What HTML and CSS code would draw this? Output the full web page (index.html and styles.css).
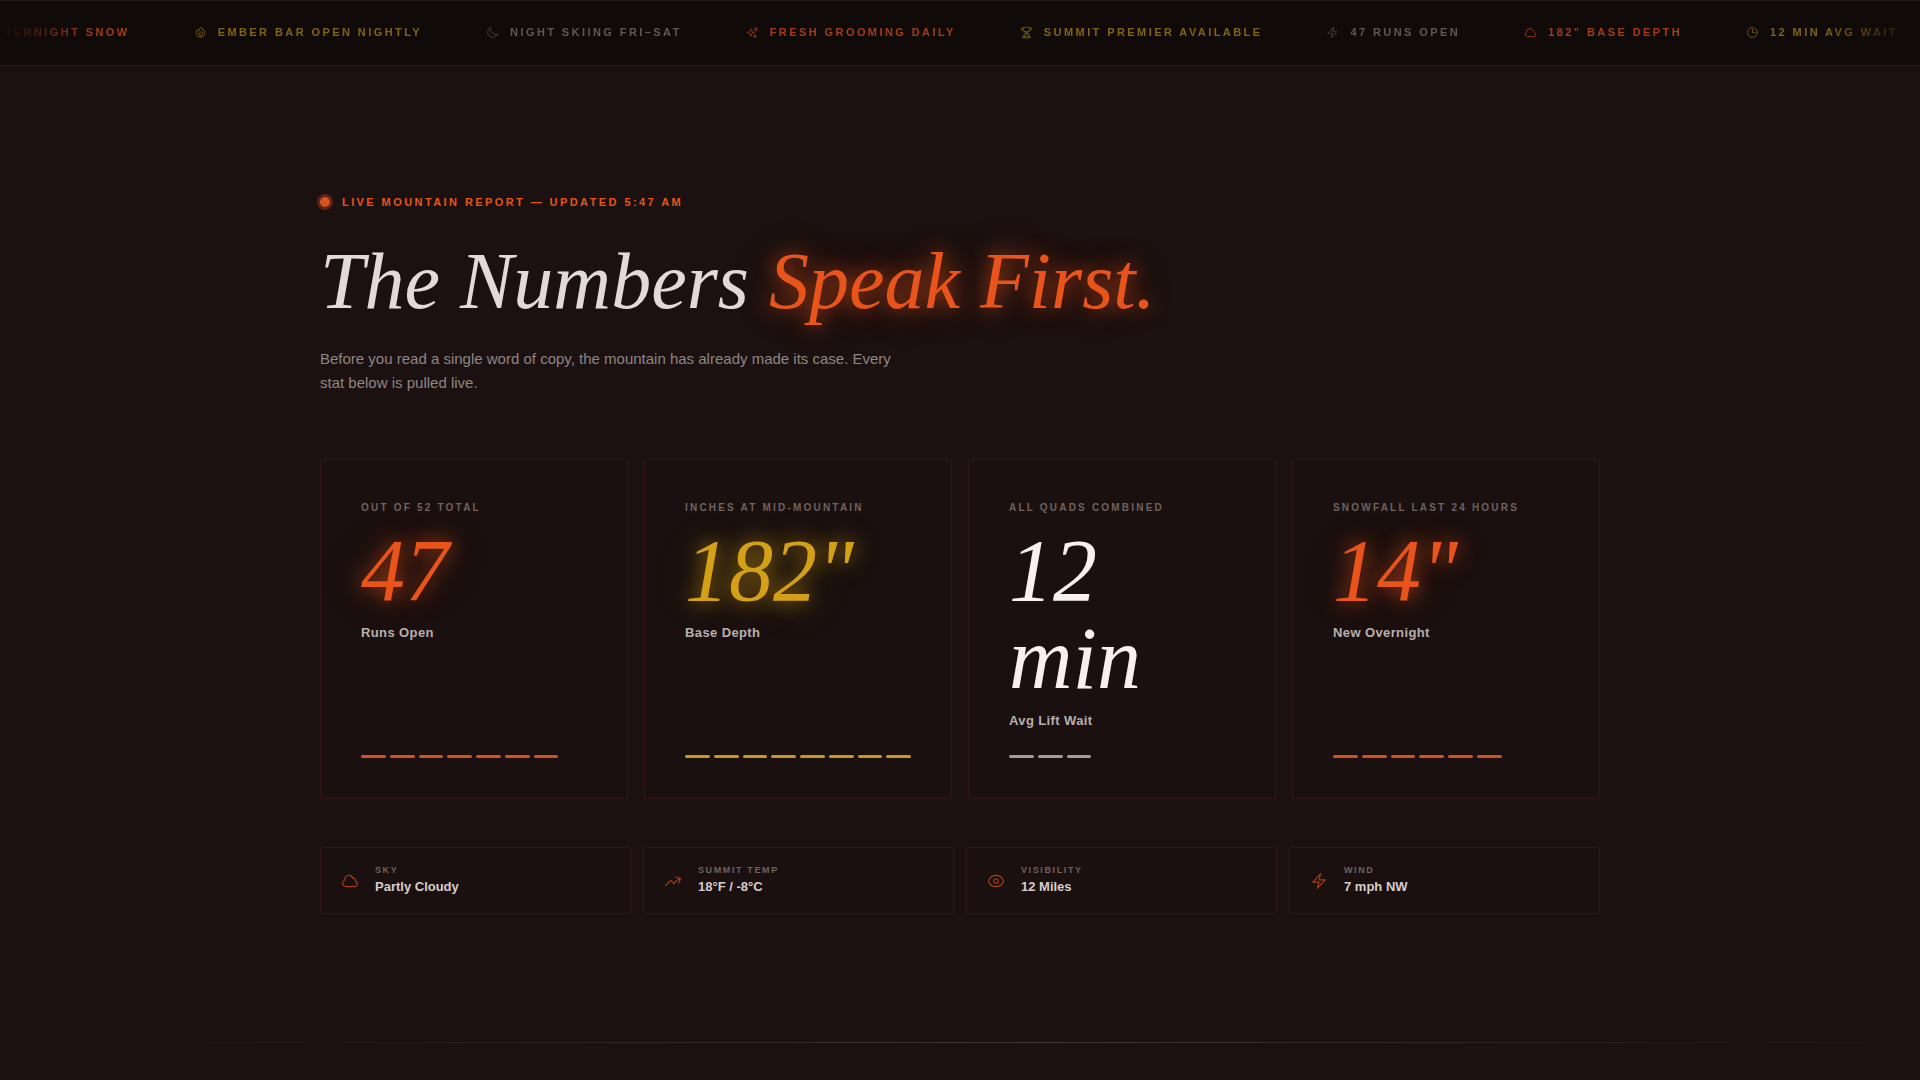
FILE: index.html
```html
<!DOCTYPE html>
<html lang="en">
<head>
<meta charset="utf-8">
<meta name="viewport" content="width=device-width, initial-scale=1">
<title>Live Mountain Report</title>
<link rel="stylesheet" href="styles.css">
</head>
<body>
<svg class="sprite" aria-hidden="true">
  <symbol id="fire" viewBox="0 0 24 24"><path d="M15.362 5.214A8.252 8.252 0 0 1 12 21 8.25 8.25 0 0 1 6.038 7.047 8.287 8.287 0 0 0 9 9.601a8.983 8.983 0 0 1 3.361-6.867 8.21 8.21 0 0 0 3 2.48Z"/><path d="M12 18a3.75 3.75 0 0 0 .495-7.468 5.99 5.99 0 0 0-1.925 3.547 5.975 5.975 0 0 1-2.133-1.001A3.75 3.75 0 0 0 12 18Z"/></symbol>
  <symbol id="moon" viewBox="0 0 24 24"><path d="M21.752 15.002A9.72 9.72 0 0 1 18 15.75c-5.385 0-9.75-4.365-9.75-9.75 0-1.33.266-2.597.748-3.752A9.753 9.753 0 0 0 3 11.25C3 16.635 7.365 21 12.75 21a9.753 9.753 0 0 0 9.002-5.998Z"/></symbol>
  <symbol id="sparkles" viewBox="0 0 24 24"><path d="M9.813 15.904 9 18.75l-.813-2.846a4.5 4.5 0 0 0-3.09-3.09L2.25 12l2.846-.813a4.5 4.5 0 0 0 3.09-3.09L9 5.25l.813 2.846a4.5 4.5 0 0 0 3.09 3.09L15.75 12l-2.846.813a4.5 4.5 0 0 0-3.09 3.09ZM18.259 8.715 18 9.75l-.259-1.035a3.375 3.375 0 0 0-2.455-2.456L14.25 6l1.036-.259a3.375 3.375 0 0 0 2.455-2.456L18 2.25l.259 1.035a3.375 3.375 0 0 0 2.456 2.456L21.75 6l-1.035.259a3.375 3.375 0 0 0-2.456 2.456ZM16.894 20.567 16.5 21.75l-.394-1.183a2.25 2.25 0 0 0-1.423-1.423L13.5 18.75l1.183-.394a2.25 2.25 0 0 0 1.423-1.423l.394-1.183.394 1.183a2.25 2.25 0 0 0 1.423 1.423l1.183.394-1.183.394a2.25 2.25 0 0 0-1.423 1.423Z"/></symbol>
  <symbol id="trophy" viewBox="0 0 24 24"><path d="M16.5 18.75h-9m9 0a3 3 0 0 1 3 3h-15a3 3 0 0 1 3-3m9 0v-3.375c0-.621-.503-1.125-1.125-1.125h-.871M7.5 18.75v-3.375c0-.621.504-1.125 1.125-1.125h.872m5.007 0H9.497m5.007 0a7.454 7.454 0 0 1-.982-3.172M9.497 14.25a7.454 7.454 0 0 0 .981-3.172M5.25 4.236c-.982.143-1.954.317-2.916.52A6.003 6.003 0 0 0 7.73 9.728M5.25 4.236V4.5c0 2.108.966 3.99 2.48 5.228M5.25 4.236V2.721C7.456 2.41 9.71 2.25 12 2.25c2.291 0 4.545.16 6.75.47v1.516M7.73 9.728a6.726 6.726 0 0 0 2.748 1.35m8.272-6.842V4.5c0 2.108-.966 3.99-2.48 5.228m2.48-5.492a46.32 46.32 0 0 1 2.916.52 6.003 6.003 0 0 1-5.395 4.972m0 0a6.726 6.726 0 0 1-2.749 1.35m0 0a6.772 6.772 0 0 1-3.044 0"/></symbol>
  <symbol id="bolt" viewBox="0 0 24 24"><path d="m3.75 13.5 10.5-11.25L12 10.5h8.25L9.75 21.75 12 13.5H3.75Z"/></symbol>
  <symbol id="cloud" viewBox="0 0 24 24"><path d="M2.25 15a4.5 4.5 0 0 0 4.5 4.5H18a3.75 3.75 0 0 0 1.332-7.257 3 3 0 0 0-3.758-3.848 5.25 5.25 0 0 0-10.233 2.33A4.502 4.502 0 0 0 2.25 15Z"/></symbol>
  <symbol id="clock" viewBox="0 0 24 24"><path d="M12 6v6h4.5m4.5 0a9 9 0 1 1-18 0 9 9 0 0 1 18 0Z"/></symbol>
  <symbol id="trend" viewBox="0 0 24 24"><path d="M2.25 18 9 11.25l4.306 4.306a11.95 11.95 0 0 1 5.814-5.518l2.74-1.22m0 0-5.94-2.281m5.94 2.28-2.28 5.941"/></symbol>
  <symbol id="eye" viewBox="0 0 24 24"><path d="M2.036 12.322a1.012 1.012 0 0 1 0-.639C3.423 7.51 7.36 4.5 12 4.5c4.638 0 8.573 3.007 9.963 7.178.07.207.07.431 0 .639C20.577 16.49 16.64 19.5 12 19.5c-4.638 0-8.573-3.007-9.963-7.178Z"/><path d="M15 12a3 3 0 1 1-6 0 3 3 0 0 1 6 0Z"/></symbol>
</svg>

<div class="ticker">
  <ul class="ticker-track">
    <li class="ticker-item ember"><svg class="icon"><use href="#sparkles"/></svg>14" OVERNIGHT SNOW</li>
    <li class="ticker-item gold"><svg class="icon"><use href="#fire"/></svg>EMBER BAR OPEN NIGHTLY</li>
    <li class="ticker-item ash"><svg class="icon"><use href="#moon"/></svg>NIGHT SKIING FRI–SAT</li>
    <li class="ticker-item ember"><svg class="icon"><use href="#sparkles"/></svg>FRESH GROOMING DAILY</li>
    <li class="ticker-item gold"><svg class="icon"><use href="#trophy"/></svg>SUMMIT PREMIER AVAILABLE</li>
    <li class="ticker-item ash"><svg class="icon"><use href="#bolt"/></svg>47 RUNS OPEN</li>
    <li class="ticker-item ember"><svg class="icon"><use href="#cloud"/></svg>182" BASE DEPTH</li>
    <li class="ticker-item gold"><svg class="icon"><use href="#clock"/></svg>12 MIN AVG WAIT</li>
  </ul>
</div>

<main class="report">
  <div class="container">
    <header class="intro">
      <p class="eyebrow"><span class="live-dot"></span>LIVE MOUNTAIN REPORT — UPDATED 5:47 AM</p>
      <h1 class="title">The Numbers <em class="title-glow">Speak First.</em></h1>
      <p class="lede">Before you read a single word of copy, the mountain has already made its case. Every stat below is pulled live.</p>
    </header>

    <section class="stats">
      <article class="stat ember">
        <p class="stat-note">OUT OF 52 TOTAL</p>
        <p class="stat-value">47</p>
        <h2 class="stat-name">Runs Open</h2>
        <div class="meter"><i></i><i></i><i></i><i></i><i></i><i></i><i></i></div>
      </article>
      <article class="stat gold">
        <p class="stat-note">INCHES AT MID-MOUNTAIN</p>
        <p class="stat-value">182"</p>
        <h2 class="stat-name">Base Depth</h2>
        <div class="meter"><i></i><i></i><i></i><i></i><i></i><i></i><i></i><i></i></div>
      </article>
      <article class="stat snow">
        <p class="stat-note">ALL QUADS COMBINED</p>
        <p class="stat-value">12 min</p>
        <h2 class="stat-name">Avg Lift Wait</h2>
        <div class="meter"><i></i><i></i><i></i></div>
      </article>
      <article class="stat ember">
        <p class="stat-note">SNOWFALL LAST 24 HOURS</p>
        <p class="stat-value">14"</p>
        <h2 class="stat-name">New Overnight</h2>
        <div class="meter"><i></i><i></i><i></i><i></i><i></i><i></i></div>
      </article>
    </section>

    <dl class="conditions">
      <div class="condition"><svg class="icon"><use href="#cloud"/></svg><div><dt>SKY</dt><dd>Partly Cloudy</dd></div></div>
      <div class="condition"><svg class="icon"><use href="#trend"/></svg><div><dt>SUMMIT TEMP</dt><dd>18°F / -8°C</dd></div></div>
      <div class="condition"><svg class="icon"><use href="#eye"/></svg><div><dt>VISIBILITY</dt><dd>12 Miles</dd></div></div>
      <div class="condition"><svg class="icon"><use href="#bolt"/></svg><div><dt>WIND</dt><dd>7 mph NW</dd></div></div>
    </dl>
  </div>
</main>
<hr class="divider">
</body>
</html>
```
FILE: styles.css
```css
:root {
  --bg: #1b1110;
  --card: #1a100f;
  --line: #341817;
  --ember: #e8541a;
  --gold: #d4a017;
  --snow: #f8f0ee;
}

* { box-sizing: border-box; margin: 0; padding: 0; }

body {
  background: var(--bg);
  color: var(--snow);
  font-family: "Liberation Sans", Arial, sans-serif;
  overflow-x: hidden;
}

.sprite { position: absolute; width: 0; height: 0; }

.icon {
  flex: none;
  fill: none;
  stroke: currentColor;
  stroke-width: 1.5;
  stroke-linecap: round;
  stroke-linejoin: round;
}

/* Ticker */
.ticker {
  --fade: linear-gradient(to right, transparent, #000 96px, #000 calc(100% - 96px), transparent);
  background: #100a09;
  border-top: 1px solid #261b1a;
  border-bottom: 1px solid #2c1b18;
  overflow: hidden;
}

.ticker-track {
  display: flex;
  justify-content: flex-end;
  gap: 64px;
  padding: 24px 22px 26px;
  list-style: none;
  mask-image: var(--fade);
}

.ticker-item {
  display: flex;
  align-items: center;
  gap: 11px;
  font-size: 11px;
  font-weight: 700;
  line-height: 14px;
  letter-spacing: .22em;
  white-space: nowrap;
}

.ticker-item .icon { width: 13px; height: 13px; }
.ticker-item.ember { color: #a53c15; }
.ticker-item.gold { color: #806414; }
.ticker-item.ash { color: #5f5856; }
.ticker-item.ash .icon { opacity: .8; }

/* Report */
.report { padding: 128px 32px; }
.container { max-width: 1280px; margin: 0 auto; }

.eyebrow {
  display: flex;
  align-items: center;
  gap: 12px;
  color: var(--ember);
  font-size: 11px;
  font-weight: 700;
  line-height: 16px;
  letter-spacing: .22em;
}

.live-dot {
  width: 10px;
  height: 10px;
  border-radius: 50%;
  background: #dc5020;
  box-shadow: 0 0 0 3px rgba(232, 84, 26, .3);
}

.title {
  margin-top: 29px;
  color: #e2dad9;
  font-family: "Liberation Serif", "Times New Roman", serif;
  font-size: 80px;
  font-style: italic;
  font-weight: 400;
  line-height: 84px;
}

.title-glow,
.stat.ember .stat-value {
  text-shadow: 0 0 20px rgba(232, 84, 26, .8), 0 0 60px rgba(232, 84, 26, .2);
}

.title-glow { color: var(--ember); }

.lede {
  max-width: 576px;
  margin-top: 24px;
  color: #8f8583;
  font-size: 15px;
  line-height: 24px;
}

.stats {
  display: grid;
  grid-template-columns: repeat(4, 1fr);
  gap: 16px;
  margin-top: 64px;
}

.stat {
  display: flex;
  flex-direction: column;
  padding: 40px;
  border: 1px solid var(--line);
  border-radius: 2px;
  background: var(--card);
}

.stat-note {
  color: #70625f;
  font-size: 10px;
  font-weight: 700;
  line-height: 15px;
  letter-spacing: .22em;
  white-space: nowrap;
}

.stat-value {
  margin-top: 12px;
  color: var(--tone);
  font-family: "Liberation Serif", "Times New Roman", serif;
  font-size: 88px;
  font-style: italic;
  line-height: 88px;
}

.stat-name {
  margin: 8px 0 24px;
  color: #b8afad;
  font-size: 13px;
  line-height: 20px;
  letter-spacing: .03em;
}

.stat.ember { --tone: var(--ember); --bar: #d94f22; }
.stat.gold { --tone: var(--gold); --bar: #c99720; }
.stat.snow { --tone: var(--snow); --bar: #a59b99; }

.stat.gold .stat-value {
  text-shadow: 0 0 20px rgba(212, 160, 23, .8), 0 0 60px rgba(212, 160, 23, .2);
}

.meter {
  display: grid;
  grid-template-columns: repeat(8, 1fr);
  gap: 4px;
  margin-top: auto;
}

.meter i { height: 3px; border-radius: 2px; background: var(--bar); }

/* Conditions */
.conditions {
  display: grid;
  grid-template-columns: repeat(4, 1fr);
  gap: 12px;
  margin-top: 48px;
}

.condition {
  display: flex;
  align-items: center;
  gap: 16px;
  padding: 16px 20px;
  border: 1px solid var(--line);
  border-radius: 2px;
  background: var(--card);
}

.condition .icon { width: 18px; height: 18px; color: #a83f17; }

.condition dt {
  color: #70625f;
  font-size: 9px;
  font-weight: 700;
  line-height: 13px;
  letter-spacing: .18em;
}

.condition dd {
  color: #d6cccb;
  font-size: 13px;
  font-weight: 700;
  line-height: 20px;
}

.divider {
  height: 1px;
  border: 0;
  background: linear-gradient(to right, transparent 8%, #443533 54%, transparent);
}

@media (max-width: 1000px) {
  .stats, .conditions { grid-template-columns: repeat(2, 1fr); }
}
```
